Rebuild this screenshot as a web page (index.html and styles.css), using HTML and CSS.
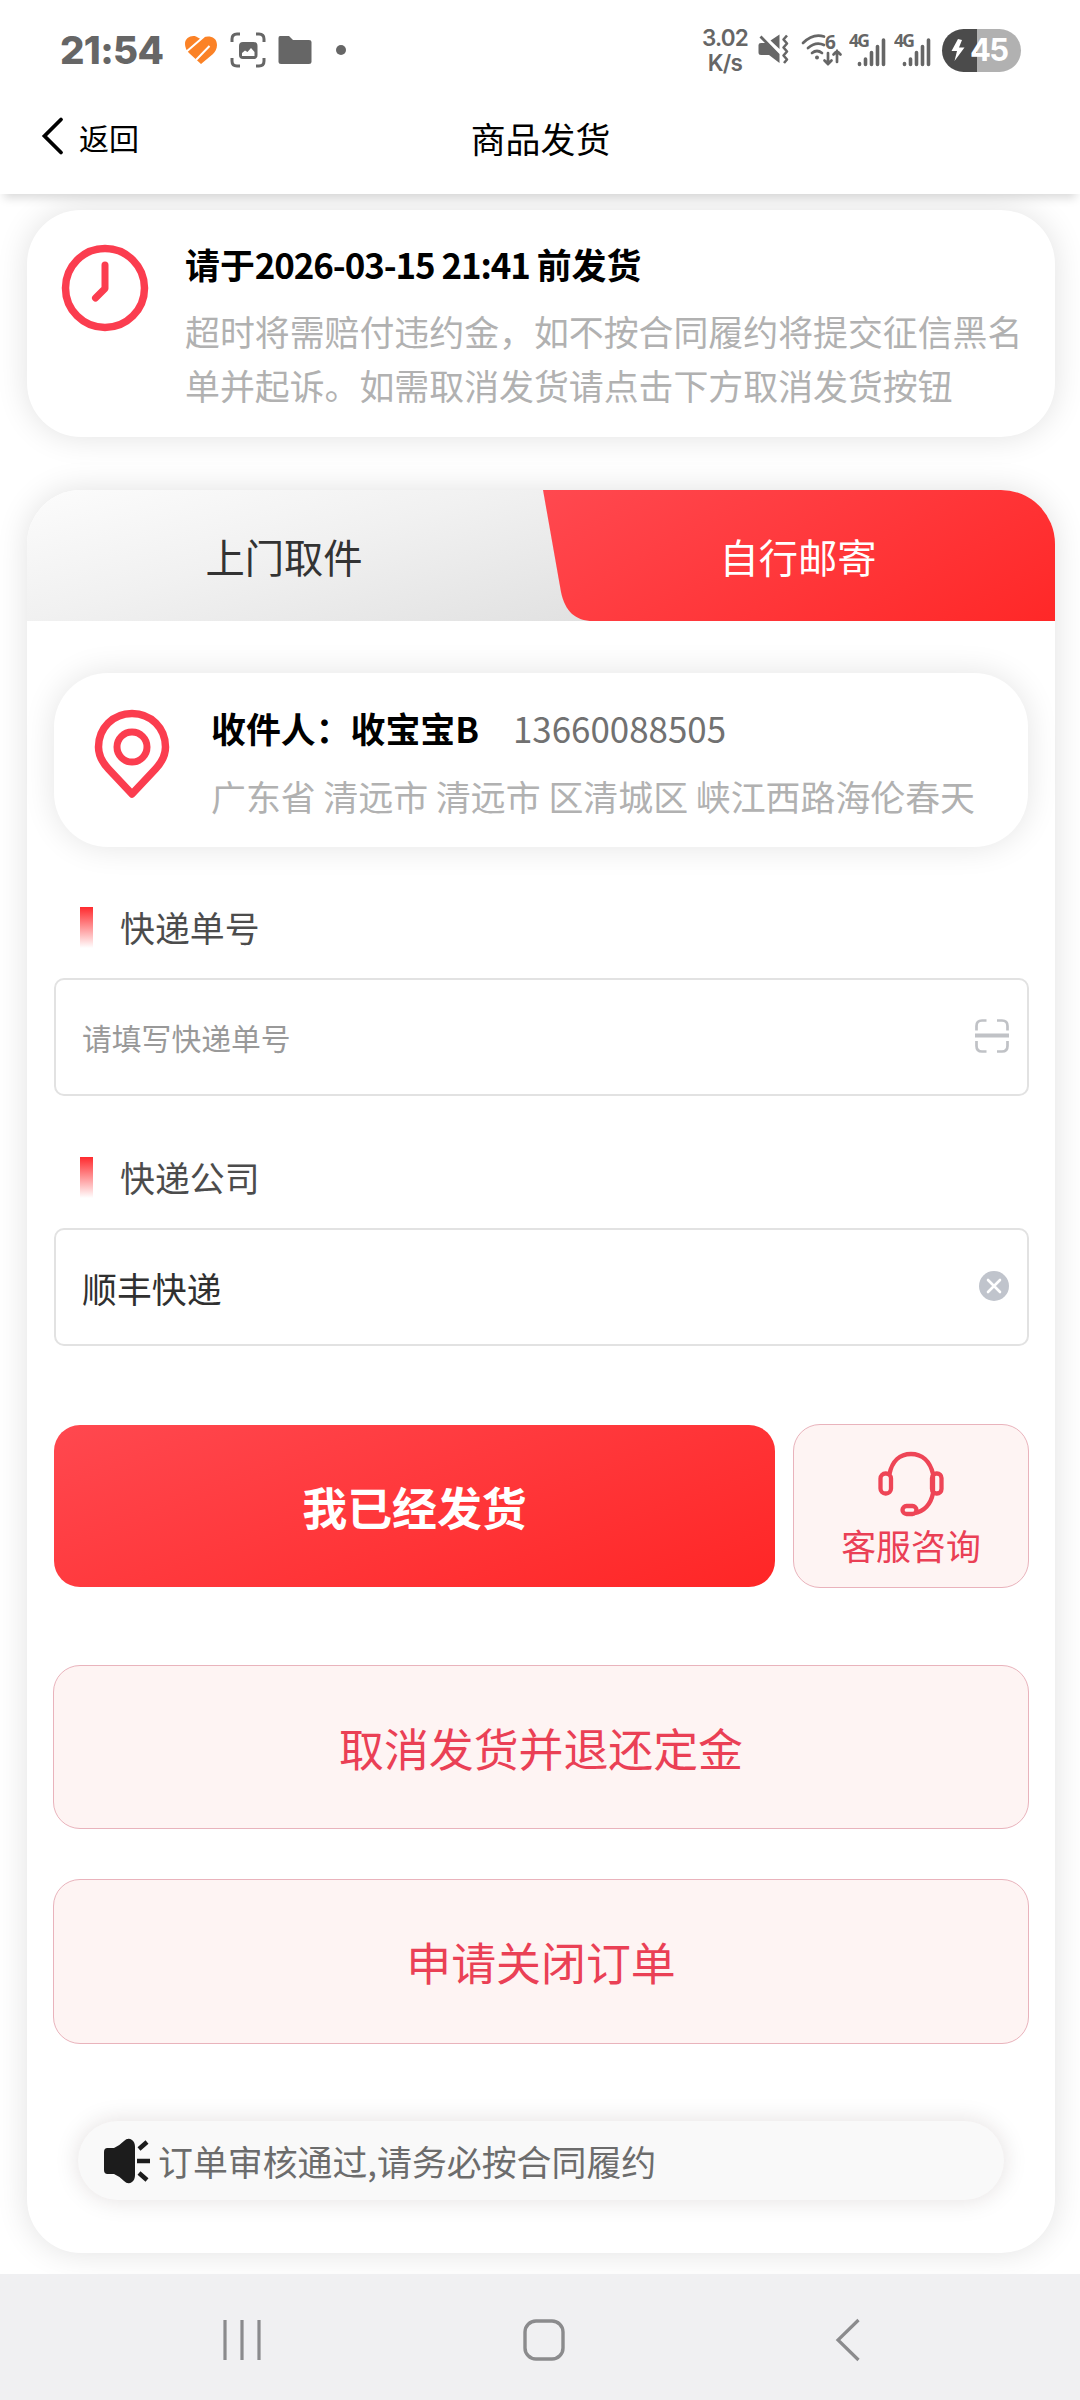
FILE: index.html
```html
<!DOCTYPE html>
<html lang="zh-CN">
<head>
<meta charset="utf-8">
<title>商品发货</title>
<link rel="stylesheet" href="styles.css">
</head>
<body>
<header class="header">
  <div class="status">
    <div class="status-left">
      <span class="clock">21:54</span>
      <svg class="heart" width="34" height="30" viewBox="0 0 34 30">
        <path d="M1 9C1 3 7 0 12 1.500L16.500 4C21 0 33 0 33 10C33 14 31 17 29 19L17 29L5 18Q1 14 1 9Z" fill="#fb8226"/>
        <path d="M2 17 20 1.500M12 25 25.500 11" fill="none" stroke="#fff" stroke-width="2"/>
      </svg>
      <svg class="shot" width="36" height="36" viewBox="0 0 36 36">
        <path d="M2 10V7Q2 2 7 2H10M26 2H29Q34 2 34 7V10M34 26V29Q34 34 29 34H26M10 34H7Q2 34 2 29V26" fill="none" stroke="#666" stroke-width="3"/>
        <rect x="9" y="10" width="18.500" height="17" rx="4" fill="#666"/>
        <path d="M12 24V21L15 18.500L17.500 20L21 16L24.500 20V24Z" fill="#fff"/>
      </svg>
      <svg class="folder" width="34" height="30" viewBox="0 0 34 30"><path d="M2 1H11L15 5H31Q33.500 5 33.500 7V27Q33.500 29 31 29H3Q0.500 29 0.500 27V3Q0.500 1 2 1Z" fill="#666"/></svg>
      <i class="dot"></i>
    </div>
    <div class="status-right">
      <div class="speed"><span>3.02</span><span>K/s</span></div>
      <svg class="mute" width="32" height="32" viewBox="0 0 32 32">
        <path d="M0.500 11Q0.500 9 3 9H7L1.500 3.500L3.500 1.500L21.500 20V29L11 21H3Q0.500 21 0.500 18.500ZM21.500 0.500V15L12.500 6.500Z" fill="#666"/>
        <path d="M29 1.500 25.500 5.500 29 9.500 25.500 13.500 29 17.500 25.500 21.500 29 25.500 26 29" fill="none" stroke="#666" stroke-width="2.600" stroke-linejoin="round"/>
      </svg>
      <svg class="wifi" width="42" height="46" viewBox="0 -6 42 46">
        <g fill="none" stroke="#666" stroke-width="2.700" stroke-linecap="round">
          <path d="M2 10Q12 0 23 3.500M7 15Q15 8 23 12M11 20Q16 16 21 20"/>
          <path d="M27 20V31M23.500 27.500 27 31 30.500 27.500M36 29V18M32.500 21.500 36 18 39.500 21.500"/>
        </g>
        <circle cx="16" cy="24.500" r="2" fill="#666"/>
        <text x="24" y="15.500" class="sig-text wifi-num">6</text>
      </svg>
      <svg class="signal" width="38" height="46" viewBox="0 -6 38 46">
        <text x="0" y="14" class="sig-text" textLength="21">4G</text>
        <path d="M10.500 30.500V31.500M16.500 26V31.500M22.500 19.500V31.500M28.500 13.500V31.500M34.500 7V31.500" stroke="#666" stroke-width="3.600" stroke-linecap="round"/>
      </svg>
      <svg class="signal" width="38" height="46" viewBox="0 -6 38 46">
        <text x="0" y="14" class="sig-text" textLength="21">4G</text>
        <path d="M10.500 30.500V31.500M16.500 26V31.500M22.500 19.500V31.500M28.500 13.500V31.500M34.500 7V31.500" stroke="#666" stroke-width="3.600" stroke-linecap="round"/>
      </svg>
      <div class="battery">
        <svg width="14" height="22" viewBox="0 0 14 22"><path d="M7 0 0.500 12H6L3.500 22L13.500 8.500H8L11 1Z" fill="#fff"/></svg>
        <span>45</span>
      </div>
    </div>
  </div>
  <div class="navbar">
    <div class="back">
      <svg width="24" height="40" viewBox="0 0 24 40"><path d="M20 3.500 3.500 20 20 36.500" fill="none" stroke="#000" stroke-width="3.800" stroke-linecap="round"/></svg>
      <span>返回</span>
    </div>
    <h1 class="title">商品发货</h1>
  </div>
</header>

<main class="content">
  <section class="card deadline">
    <svg class="deadline-icon" width="88" height="88" viewBox="0 0 88 88" fill="none" stroke="#fb3d4f">
      <circle cx="44" cy="44" r="39.500" stroke-width="7.500"/>
      <path d="M44 21V44.500L34.500 54" stroke-width="7" stroke-linecap="round" stroke-linejoin="round"/>
    </svg>
    <div>
      <h2 class="strong">请于<span class="date">2026-03-15 21:41 </span>前发货</h2>
      <p class="warn">超时将需赔付违约金，如不按合同履约将提交征信黑名单并起诉。如需取消发货请点击下方取消发货按钮</p>
    </div>
  </section>

  <section class="card order">
    <div class="tabs">
      <div class="tab tab-pickup">上门取件</div>
      <div class="tab tab-mail">
        <svg class="tab-shape" width="513" height="131" viewBox="0 0 513 131">
          <defs><linearGradient id="red" gradientUnits="userSpaceOnUse" x1="170" y1="-90" x2="343" y2="221"><stop offset="0" stop-color="#ff484f"/><stop offset="1" stop-color="#ff2828"/></linearGradient></defs>
          <path d="M0 0H513V131H50C32 131 22 121 18 102Z" fill="url(#red)"/>
        </svg>
        <span>自行邮寄</span>
      </div>
    </div>
    <div class="body">
      <div class="address">
        <svg class="pin" width="76" height="90" viewBox="0 0 76 90" fill="none" stroke="#fb3d4f">
          <path d="M38 85 14.500 60C8 53 4.500 47 4.500 38C4.500 19 19 4.500 38 4.500S71.500 19 71.500 38C71.500 47 68 53 61.500 60Z" stroke-width="7.500" stroke-linejoin="round"/>
          <circle cx="38" cy="38" r="15" stroke-width="7"/>
        </svg>
        <div class="address-text">
          <div><b class="strong">收件人：收宝宝B</b><span class="phone">13660088505</span></div>
          <p class="place">广东省 清远市 清远市 区清城区 峡江西路海伦春天</p>
        </div>
      </div>

      <div class="label"><i></i><span>快递单号</span></div>
      <div class="field">
        <span class="placeholder">请填写快递单号</span>
        <svg width="34" height="34" viewBox="0 0 34 34" fill="none" stroke="#c0c2c6">
          <path d="M1.500 11.500V7Q1.500 1.500 7 1.500H11.500M22 1.500H27Q32.500 1.500 32.500 7V11.500M32.500 22V27Q32.500 32.500 27 32.500H22M11.500 32.500H7Q1.500 32.500 1.500 27V22" stroke-width="2.700"/>
          <path d="M0 16.500H34" stroke-width="4"/>
        </svg>
      </div>

      <div class="label second"><i></i><span>快递公司</span></div>
      <div class="field">
        <span class="value">顺丰快递</span>
        <svg width="30" height="30" viewBox="0 0 30 30"><circle cx="15" cy="15" r="15" fill="#c0c4cc"/><path d="M9 9 21 21M21 9 9 21" stroke="#fff" stroke-width="2.600" stroke-linecap="round"/></svg>
      </div>

      <div class="actions">
        <div class="btn-primary">我已经发货</div>
        <div class="btn-service">
          <svg width="66" height="66" viewBox="0 0 66 66" fill="none" stroke="#ee4556" stroke-width="4.300">
            <path d="M11.500 23C14 10 22 3 33 3S52 10 55 23V42C53 53 46 61 36 62"/>
            <rect x="2.500" y="22.500" width="10.500" height="20" rx="5"/>
            <rect x="54" y="22.500" width="9.500" height="20" rx="4.500"/>
            <rect x="24.500" y="55" width="14" height="8" rx="4"/>
          </svg>
          <span>客服咨询</span>
        </div>
      </div>
      <div class="btn-light cancel">取消发货并退还定金</div>
      <div class="btn-light close">申请关闭订单</div>

      <div class="notice">
        <svg width="48" height="46" viewBox="0 0 48 46">
          <path d="M0 14Q0 10 3.500 10H10Q15 8 20 3Q24 -1 28 2Q31 4 31 9V37Q31 42 28 44Q24 47 20 43Q15 38 10 36H3.500Q0 36 0 32Z" fill="#1c1c1c"/>
          <path d="M35 11 43 4M33 23H46M35 35 43 42" stroke="#1c1c1c" stroke-width="4.500"/>
        </svg>
        <span>订单审核通过,请务必按合同履约</span>
      </div>
    </div>
  </section>
</main>

<footer class="sysnav">
  <svg width="38" height="42" viewBox="0 0 38 42"><path d="M2 1V41M19 1V41M36 1V41" stroke="#8b8b8d" stroke-width="3.200"/></svg>
  <svg width="42" height="42" viewBox="0 0 42 42"><rect x="2" y="2" width="38" height="38" rx="11" fill="none" stroke="#8b8b8d" stroke-width="3.400"/></svg>
  <svg width="26" height="44" viewBox="0 0 26 44"><path d="M23.500 2 3 22 23.500 42" fill="none" stroke="#8b8b8d" stroke-width="3.200"/></svg>
</footer>
</body>
</html>
```
FILE: styles.css
```css
* { box-sizing: border-box; margin: 0; padding: 0; }

body {
  width: 1080px;
  height: 2400px;
  display: flex;
  flex-direction: column;
  overflow: hidden;
  background: #fff;
  color: #000;
  font-family: "Noto Sans CJK SC", sans-serif;
  font-size: 34.9px;
  line-height: 50px;
}

svg { display: block; flex: none; }

.header {
  position: relative;
  z-index: 1;
  flex: none;
  height: 194px;
  background: #fff;
  box-shadow: 0 8px 9px -4px rgba(0, 0, 0, .15);
}

.status {
  height: 100px;
  display: flex;
  justify-content: space-between;
  padding: 0 59px 0 60px;
  color: #666;
  font-family: Inter, sans-serif;
}
.status-left, .status-right { display: flex; align-items: center; }
.clock {
  width: 124px;
  font-size: 38.500px;
  font-weight: 800;
  letter-spacing: -.7px;
}
.heart { margin-right: 12px; }
.shot { margin-right: 12px; }
.folder { margin-right: 24px; }
.dot { width: 10px; height: 10px; border-radius: 50%; background: #666; }

.speed {
  display: flex;
  flex-direction: column;
  align-items: center;
  width: 46px;
  margin-right: 10px;
  font-size: 22.500px;
  font-weight: 600;
  line-height: 25px;
  letter-spacing: -.8px;
}
.mute { margin-right: 11px; }
.wifi { margin-right: 6px; }
.signal { margin-right: 7px; }
.signal + .battery { margin-left: 3px; }
.sig-text { font: 700 17.500px "Noto Sans", sans-serif; fill: #666; }
.wifi-num { font-size: 19px; }
.battery {
  display: flex;
  align-items: center;
  width: 79px;
  height: 43px;
  padding-left: 9px;
  border-radius: 22px;
  background: linear-gradient(90deg, #4b4b4b 35px, #b1b1b1 35px);
}
.battery span {
  margin-left: 5px;
  color: #fff;
  font-size: 31px;
  font-weight: 700;
  letter-spacing: -1.800px;
}

.navbar {
  display: grid;
  grid-template-columns: 1fr auto 1fr;
  align-items: center;
  height: 76px;
  padding: 0 40px 0 41px;
}
.back { display: flex; align-items: center; gap: 14px; font-size: 30px; }
.back svg { margin-bottom: 5px; }
.back span { padding-bottom: 3px; }
.title { font-size: 34.900px; font-weight: 400; }

.content { flex: none; height: 2079.500px; padding: 16px 25px 0 27px; }

.card {
  border-radius: 54px;
  background: #fff;
  box-shadow: 0 0 32px rgba(0, 0, 0, .12);
}

.deadline { display: flex; height: 227px; padding: 29px 20px 0 34px; }
.deadline-icon { margin: 5px 36px 0 0; }
.strong { font-size: 34.900px; font-weight: 700; }
.date { letter-spacing: -1.070px; }
.warn { width: 840px; margin-top: 15px; color: #b1b1b1; line-height: 54.300px; }

.order { height: 1763px; margin-top: 53px; }
.tabs {
  display: flex;
  height: 131px;
  border-radius: 54px 54px 0 0;
  overflow: hidden;
  background: linear-gradient(165deg, #fcfcfc 0, #f1f1f1 45%, #e1e1e1 100%) 0 0 / 570px 100% no-repeat;
  font-size: 39.300px;
  line-height: 131px;
  text-align: center;
}
.tab { width: 516px; padding-right: 2px; color: #333; }
.tab-mail { position: relative; width: 512px; color: #fff; }
.tab-shape { position: absolute; inset: 0; }
.tab-mail span { position: relative; }

.body { padding: 52px 27px 0; }

.address {
  display: flex;
  height: 174px;
  padding: 30px 0 0 41px;
  border-radius: 54px;
  box-shadow: 0 0 32px rgba(0, 0, 0, .11);
}
.pin { margin: 6px 41px 0 -1px; }
.address-text { white-space: nowrap; }
.phone { margin-left: 34px; color: #717171; }
.place { margin-top: 18px; color: #b1b1b1; }

.label { display: flex; align-items: center; height: 60px; margin: 50px 0 21px 26px; color: #4c4c4c; }
.label.second { margin-top: 51px; margin-bottom: 21px; }
.label i { width: 13px; height: 41px; margin-right: 27px; background: linear-gradient(#ff2a2e, rgba(255, 60, 60, 0)); }
.label span { padding-bottom: 1px; }

.field {
  display: flex;
  align-items: center;
  justify-content: space-between;
  height: 118px;
  margin-right: -1px;
  padding: 0 18px 0 26px;
  border: 2px solid #e2e2e2;
  border-radius: 10px;
}
.field svg { margin-bottom: 2px; }
.placeholder { color: #999; font-size: 29.800px; }
.value { padding-top: 2px; color: #303030; }

.actions { display: flex; align-items: center; justify-content: space-between; height: 164px; margin: 78px -1px 0 0; }
.btn-primary {
  width: 721px;
  height: 162px;
  border-radius: 26px;
  background: linear-gradient(160deg, #ff484f, #ff2626);
  color: #fff;
  font-size: 44.900px;
  font-weight: 700;
  line-height: 164px;
  text-align: center;
}
.btn-service, .btn-light {
  border: 1.500px solid #e9b3bc;
  border-radius: 27px;
  background: #fef4f3;
  color: #ea4055;
}
.btn-service { display: flex; flex-direction: column; align-items: center; width: 236px; height: 164px; padding-top: 26px; }
.btn-service span { margin-top: 3px; }
.btn-light { height: 164px; margin: 0 -1px; font-size: 44.900px; line-height: 164px; text-align: center; }
.cancel { margin-top: 77px; }
.close { height: 165px; margin-top: 50px; }

.notice {
  display: flex;
  align-items: center;
  height: 79px;
  margin: 77px 24px 0;
  padding-left: 26px;
  border-radius: 40px;
  background: #f9f9f9;
  box-shadow: 0 0 24px rgba(40, 0, 0, .13);
  color: #6c6c6c;
}
.notice span { margin-left: 6px; }

.sysnav {
  position: relative;
  z-index: 1;
  display: flex;
  align-items: center;
  flex: 1;
  padding: 7px 0 0 223px;
  background: #f0f0f2;
}
.sysnav svg:nth-child(2) { margin: 0 270px 0 262px; }
```
